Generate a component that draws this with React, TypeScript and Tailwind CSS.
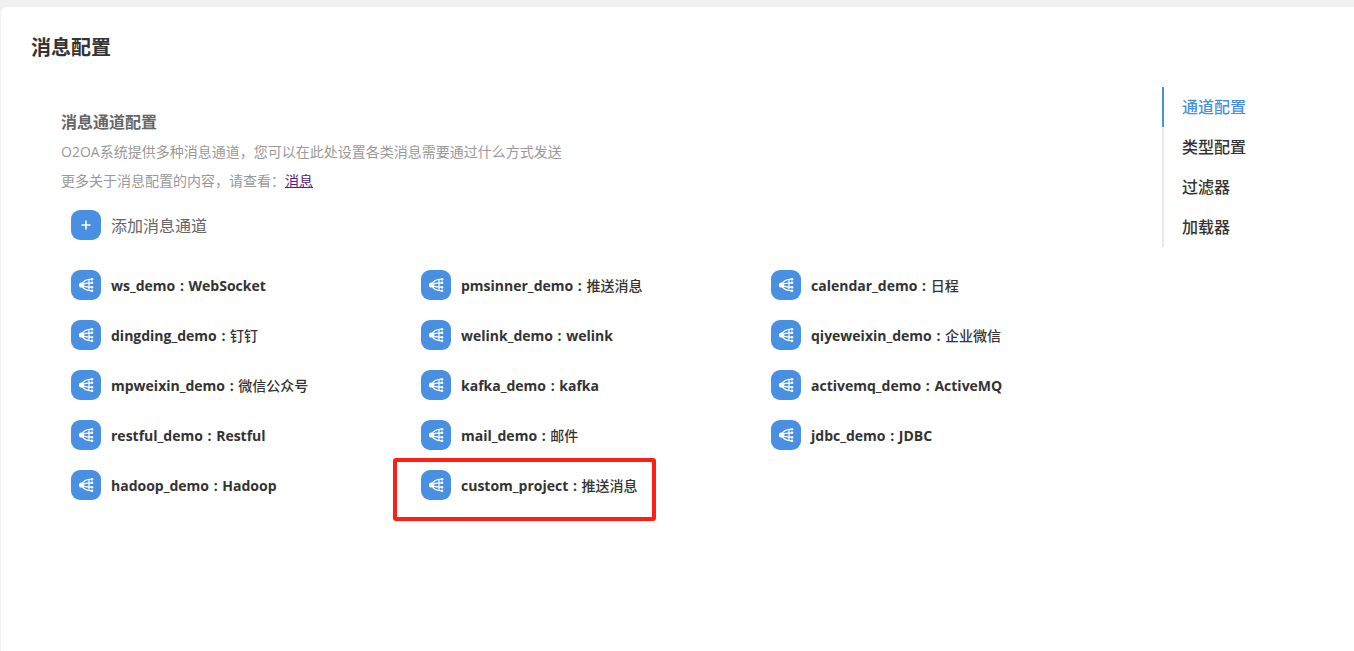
const FONT = "font-['Open_Sans','Noto_Sans_CJK_SC',sans-serif]";

const channels = [
  ["ws_demo", "WebSocket"],
  ["pmsinner_demo", "推送消息", true],
  ["calendar_demo", "日程", true],
  ["dingding_demo", "钉钉", true],
  ["welink_demo", "welink"],
  ["qiyeweixin_demo", "企业微信", true],
  ["mpweixin_demo", "微信公众号", true],
  ["kafka_demo", "kafka"],
  ["activemq_demo", "ActiveMQ"],
  ["restful_demo", "Restful"],
  ["mail_demo", "邮件", true],
  ["jdbc_demo", "JDBC"],
  ["hadoop_demo", "Hadoop"],
  ["custom_project", "推送消息", true],
] as const;

const navItems = ["通道配置", "类型配置", "过滤器", "加载器"];

function ChannelIcon() {
  return (
    <div className="flex h-[30px] w-[30px] shrink-0 items-center justify-center rounded-[9px] bg-[#4a90e2]">
      <svg width="16" height="16" viewBox="0 0 16 16" fill="none" stroke="white">
        <circle cx="3.5" cy="8" r="2.6" fill="white" stroke="none" />
        <path d="M3.5 8C5 4 8 2.2 14 2.2M3.5 8C6 6.2 9 5.8 14 5.8M3.5 8C6 9.8 9 10.2 14 10.2M3.5 8C5 12 8 13.8 14 13.8" strokeWidth="1.2" />
        <path d="M11 2.5V13.5" strokeWidth="1.2" />
        <circle cx="14" cy="2.2" r="1.3" fill="white" stroke="none" />
        <circle cx="14" cy="5.8" r="1.3" fill="white" stroke="none" />
        <circle cx="14" cy="10.2" r="1.3" fill="white" stroke="none" />
        <circle cx="14" cy="13.8" r="1.3" fill="white" stroke="none" />
      </svg>
    </div>
  );
}

export default function App() {
  return (
    <div className={`${FONT} flex h-[651px] w-[1354px] flex-col overflow-hidden bg-[#f0f0f0] pl-px pt-[7px]`}>
      <div className="flex flex-1 rounded-tl-md bg-white">
        {/* Main */}
        <div className="w-[1161px] shrink-0">
          <h1 className="ml-[30px] mt-[27px] h-7 text-[20px] font-bold leading-7 text-[#333]">消息配置</h1>
          <div className="ml-[60px] mt-[48px]">
            <h2 className="h-6 text-base font-semibold leading-6 text-[#666]">消息通道配置</h2>
            <p className="mt-[7px] h-[22px] text-sm leading-[22px] text-[#999]">
              O2OA系统提供多种消息通道，您可以在此处设置各类消息需要通过什么方式发送
            </p>
            <p className="mt-[7px] h-[22px] text-sm leading-[22px] text-[#999]">
              更多关于消息配置的内容，请查看：
              <a href="#" className="text-[#551a8b] underline">消息</a>
            </p>
          </div>
          <div className="ml-[70px] mt-[18px] flex items-center gap-2.5">
            <div className="flex h-[30px] w-[30px] items-center justify-center rounded-[9px] bg-[#4a90e2]">
              <svg width="10" height="10" viewBox="0 0 10 10" stroke="white" strokeWidth="1.6">
                <path d="M5 0.5V9.5M0.5 5H9.5" />
              </svg>
            </div>
            <span className="pt-0.5 text-base text-[#666]">添加消息通道</span>
          </div>
          <div className="relative ml-[70px] mt-[30px] grid w-[1050px] grid-cols-3">
            {channels.map(([id, label, cjk]) => (
              <div key={id} className="flex h-[50px] items-start gap-2.5">
                <ChannelIcon />
                <span className="pt-px text-sm font-bold leading-[30px] text-[#333] [word-spacing:1px]">
                  {id} : <span className={cjk ? "font-medium" : "font-bold"}>{label}</span>
                </span>
              </div>
            ))}
            {/* red highlight drawn over the screenshot */}
            <div className="absolute left-[322px] top-[188px] h-[63px] w-[263px] rounded-[3px] border-4 border-[#ff1f14]" />
          </div>
        </div>

        {/* Side nav */}
        <div className="mt-[80px] h-40 w-[140px] border-l-2 border-[#e5e8ec]">
          {navItems.map((item, i) => (
            <div
              key={item}
              className={
                i === 0
                  ? "-ml-0.5 h-10 border-l-2 border-[#4a90e2] pl-[18px] text-base font-medium leading-10 text-[#4a90e2]"
                  : "-ml-0.5 h-10 pl-5 text-base font-medium leading-10 text-[#333]"
              }
            >
              {item}
            </div>
          ))}
        </div>
      </div>
    </div>
  );
}
